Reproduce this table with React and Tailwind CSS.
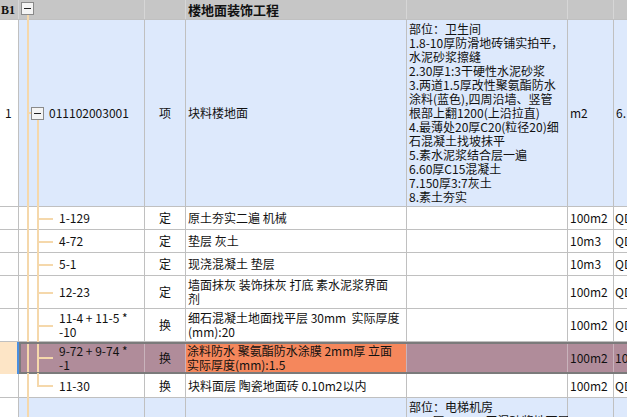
import React from "react";

const FONT = { fontFamily: '"Noto Sans CJK SC", "Liberation Sans", sans-serif' };
const G = "border-[#c0c0c0]";
const TL = "bg-[#f5d8ab]";

function VLine({ x, top = 0, bottom = 0, h }) {
  const style = h != null ? { left: x, top, height: h } : { left: x, top, bottom };
  return <span className={`absolute w-[2px] ${TL}`} style={style} />;
}
function HLine({ x, y, w }) {
  return <span className={`absolute h-[2px] ${TL}`} style={{ left: x, top: y, width: w }} />;
}

function MinusBox({ className }) {
  return (
    <span className={`absolute flex h-[13px] w-[13px] items-center justify-center border border-[#8a8a8a] bg-[#f4f4f4] ${className}`}>
      <span className="h-px w-[7px] bg-[#222]" />
    </span>
  );
}

function ChildRow({ h, code, type, name, unit, last, qd = "QD" }) {
  const center = Math.round(h / 2) - 1;
  return (
    <div className={`relative flex border-b ${G} bg-white`} style={{ height: h }}>
      <div className={`w-[19px] shrink-0 border-r ${G}`} />
      <div className={`flex w-[126px] shrink-0 items-center border-r ${G} pl-[40px] text-[12px] leading-[14px] text-[#111]`}>
        <div>{code}</div>
      </div>
      <div className={`flex w-[41px] shrink-0 items-center justify-center border-r ${G} text-[12px]`}>{type}</div>
      <div className={`flex w-[221px] shrink-0 items-center border-r ${G} pl-[2px] text-[12px] leading-[14px] text-[#111]`}>
        <div>{name}</div>
      </div>
      <div className={`w-[161px] shrink-0 border-r ${G}`} />
      <div className={`flex w-[46px] shrink-0 items-center border-r ${G} pl-[2px] text-[12px]`}>{unit}</div>
      <div className="flex flex-1 items-center pl-[1px] text-[12px]">{qd}</div>
      <VLine x={27} top={-1} bottom={-1} />
      {last ? <VLine x={37} top={-1} h={center + 1} /> : <VLine x={37} top={-1} bottom={-1} />}
      <HLine x={37} y={center} w={16} />
    </div>
  );
}

const desc1 = [
  "部位：卫生间",
  "1.8-10厚防滑地砖铺实拍平，",
  "水泥砂浆擦缝",
  "2.30厚1:3干硬性水泥砂浆",
  "3.两道1.5厚改性聚氨酯防水",
  "涂料(蓝色),四周沿墙、竖管",
  "根部上翻1200(上沿拉直)",
  "4.最薄处20厚C20(粒径20)细",
  "石混凝土找坡抹平",
  "5.素水泥浆结合层一遍",
  "6.60厚C15混凝土",
  "7.150厚3:7灰土",
  "8.素土夯实",
];

export default function App() {
  return (
    <div className="h-[417px] w-[627px] overflow-hidden bg-white text-[#111]" style={FONT}>
      {/* header */}
      <div className={`relative flex h-[20px] border-b ${G} bg-[#c6c6c6]`}>
        <div className="flex w-[19px] shrink-0 items-center border-r border-[#d6d6d6] pl-[1px] text-[12px] font-bold" style={{ fontFamily: '"Liberation Serif", serif' }}>B1</div>
        <div className="w-[126px] shrink-0 border-r border-[#d6d6d6]" />
        <div className="w-[41px] shrink-0 border-r border-[#d6d6d6]" />
        <div className="flex w-[221px] shrink-0 items-center border-r border-[#d6d6d6] pl-[2px] text-[13px] font-bold">楼地面装饰工程</div>
        <div className="w-[161px] shrink-0 border-r border-[#d6d6d6]" />
        <div className="w-[46px] shrink-0 border-r border-[#d6d6d6]" />
        <div className="flex-1" />
        <VLine x={27} top={14} bottom={-1} />
        <MinusBox className="left-[21px] top-[2px]" />
      </div>

      {/* row 1 */}
      <div className={`relative flex h-[187px] border-b ${G}`}>
        <div className={`flex w-[19px] shrink-0 items-center border-r ${G} bg-white pl-[5px] text-[12px]`}>1</div>
        <div className={`flex w-[126px] shrink-0 items-center border-r ${G} bg-[#dde9fc] pl-[30px] text-[12px]`}>011102003001</div>
        <div className={`flex w-[41px] shrink-0 items-center justify-center border-r ${G} bg-[#dde9fc] text-[12px]`}>项</div>
        <div className={`flex w-[221px] shrink-0 items-center border-r ${G} bg-[#dde9fc] pl-[2px] text-[12px]`}>块料楼地面</div>
        <div className={`w-[161px] shrink-0 border-r ${G} bg-[#dde9fc] pl-[2px] pt-[2px] text-[12px] leading-[14px]`}>
          {desc1.map((l, i) => (
            <div key={i} className="whitespace-nowrap">{l}</div>
          ))}
        </div>
        <div className={`flex w-[46px] shrink-0 items-center border-r ${G} bg-[#dde9fc] pl-[2px] text-[12px]`}>m2</div>
        <div className="flex flex-1 items-center bg-[#dde9fc] pl-[2px] text-[12px]">6.</div>
        <VLine x={27} top={-1} bottom={-1} />
        <HLine x={27} y={92} w={5} />
        <VLine x={37} top={99} bottom={-1} />
        <MinusBox className="left-[31px] top-[87px]" />
      </div>

      <ChildRow h={23} code="1-129" type="定" name="原土夯实二遍 机械" unit="100m2" />
      <ChildRow h={23} code="4-72" type="定" name="垫层 灰土" unit="10m3" />
      <ChildRow h={23} code="5-1" type="定" name="现浇混凝土 垫层" unit="10m3" />
      <ChildRow h={33} code="12-23" type="定" name={<>墙面抹灰 装饰抹灰 打底 素水泥浆界面<br />剂</>} unit="100m2" />
      <ChildRow h={33} code={<>11-4 + 11-5 *<br />-10</>} type="换" name={<>细石混凝土地面找平层 30mm&nbsp; 实际厚度<br />(mm):20</>} unit="100m2" />

      {/* selected row */}
      <div className="relative flex h-[32px]">
        <div className="w-[17px] shrink-0 bg-[#fde5c6]" />
        <div className="w-[2px] shrink-0 bg-[#4a8fe0]" />
        <div className="flex flex-1 border-y-2 border-l-2 border-[#7b7b7b] bg-[#b08c9a]">
          <div className="flex w-[124px] shrink-0 items-center border-r border-[#c9b3bc] pl-[38px] text-[12px] leading-[14px]">
            <div>9-72 + 9-74 *<br />-1</div>
          </div>
          <div className="flex w-[41px] shrink-0 items-center justify-center border-r border-[#c9b3bc] text-[12px]">换</div>
          <div className="flex w-[221px] shrink-0 items-center border-r border-[#c9b3bc] bg-[#f5875c] pl-[1px] text-[12px] leading-[14px]">
            <div>涂料防水 聚氨酯防水涂膜 2mm厚 立面<br />实际厚度(mm):1.5</div>
          </div>
          <div className="w-[161px] shrink-0 border-r border-[#c9b3bc]" />
          <div className="flex w-[46px] shrink-0 items-center border-r border-[#c9b3bc] pl-[2px] text-[12px]">100m2</div>
          <div className="flex flex-1 items-center pl-[1px] text-[12px]">10</div>
        </div>
        <VLine x={27} top={2} bottom={2} />
        <VLine x={37} top={2} bottom={2} />
        <HLine x={37} y={15} w={16} />
      </div>

      <ChildRow h={24} code="11-30" type="换" name="块料面层 陶瓷地面砖 0.10m2以内" unit="100m2" last />

      {/* next item */}
      <div className="relative flex h-[40px]">
        <div className={`w-[19px] shrink-0 border-r ${G} bg-white`} />
        <div className={`w-[126px] shrink-0 border-r ${G} bg-[#dde9fc]`} />
        <div className={`w-[41px] shrink-0 border-r ${G} bg-[#dde9fc]`} />
        <div className={`w-[221px] shrink-0 border-r ${G} bg-[#dde9fc]`} />
        <div className={`w-[161px] shrink-0 border-r ${G} bg-[#dde9fc] pl-[2px] pt-[2px] text-[12px] leading-[14px]`}>
          <div className="whitespace-nowrap">部位：电梯机房</div>
          <div className="whitespace-nowrap">1.30厚DS M20干混砂浆地面层</div>
        </div>
        <div className={`w-[46px] shrink-0 border-r ${G} bg-[#dde9fc]`} />
        <div className="flex-1 bg-[#dde9fc]" />
        <VLine x={27} top={-1} bottom={0} />
      </div>
    </div>
  );
}
